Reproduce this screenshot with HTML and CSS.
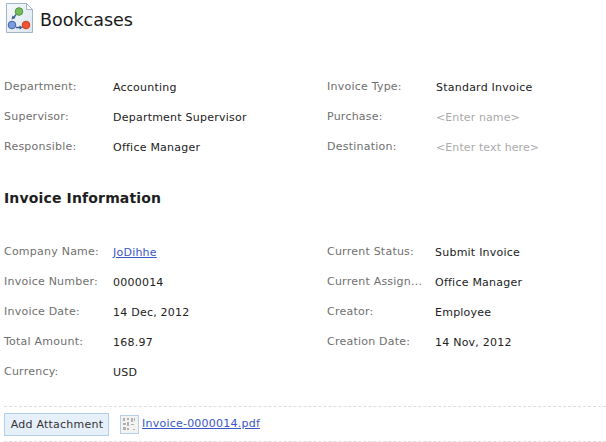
FILE: index.html
```html
<!DOCTYPE html>
<html lang="en">
<head>
<meta charset="utf-8">
<title>Bookcases</title>
<link rel="stylesheet" href="styles.css">
</head>
<body>
<header class="title-bar">
  <svg class="app-icon" width="27" height="30" viewBox="0 0 27 30">
    <defs>
      <linearGradient id="page" x1="0" y1="0" x2="1" y2="1">
        <stop offset="0" stop-color="#f8fafc"/>
        <stop offset="1" stop-color="#dbe5ef"/>
      </linearGradient>
    </defs>
    <path d="M0.500 0.500H20.500L26.500 6.500V29.500H0.500Z" fill="url(#page)" stroke="#a3b5c8"/>
    <path d="M20.500 0.500V6.500H26.500Z" fill="#fff" stroke="#a3b5c8"/>
    <path d="M10 11.500L7.500 15M10 24.500H15" stroke="#3d5f96" stroke-width="1.300" fill="none"/>
    <path d="M5.500 16.500L9.500 15L6.500 12.500ZM17 24.500L13.500 22.500V26.500Z" fill="#3d5f96"/>
    <circle cx="13" cy="8.500" r="3.800" fill="#76bb5c" stroke="#4f9a3f"/>
    <circle cx="6" cy="22" r="3.800" fill="#7a9edd" stroke="#3f62a8"/>
    <circle cx="20" cy="22" r="3.800" fill="#f0552f" stroke="#c5401f"/>
  </svg>
  <h1 class="title">Bookcases</h1>
</header>

<section class="fields top-fields">
  <div class="field"><span class="label">Department:</span><span class="value">Accounting</span></div>
  <div class="field"><span class="label">Invoice Type:</span><span class="value">Standard Invoice</span></div>
  <div class="field"><span class="label">Supervisor:</span><span class="value">Department Supervisor</span></div>
  <div class="field"><span class="label">Purchase:</span><span class="value placeholder">&lt;Enter name&gt;</span></div>
  <div class="field"><span class="label">Responsible:</span><span class="value">Office Manager</span></div>
  <div class="field"><span class="label">Destination:</span><span class="value placeholder">&lt;Enter text here&gt;</span></div>
</section>

<h2 class="section-title">Invoice Information</h2>

<section class="fields info-fields">
  <div class="field"><span class="label">Company Name:</span><span class="value"><a href="#">JoDihhe</a></span></div>
  <div class="field narrow"><span class="label">Current Status:</span><span class="value">Submit Invoice</span></div>
  <div class="field"><span class="label">Invoice Number:</span><span class="value">0000014</span></div>
  <div class="field narrow"><span class="label">Current Assign...</span><span class="value">Office Manager</span></div>
  <div class="field"><span class="label">Invoice Date:</span><span class="value">14 Dec, 2012</span></div>
  <div class="field narrow"><span class="label">Creator:</span><span class="value">Employee</span></div>
  <div class="field"><span class="label">Total Amount:</span><span class="value">168.97</span></div>
  <div class="field narrow"><span class="label">Creation Date:</span><span class="value">14 Nov, 2012</span></div>
  <div class="field"><span class="label">Currency:</span><span class="value">USD</span></div>
</section>

<footer class="attachments">
  <button class="add-btn" type="button">Add Attachment</button>
  <svg class="file-icon" width="19" height="19" viewBox="0 0 19 19">
    <rect x="0.500" y="0.500" width="18" height="18" fill="#f2f2f2" stroke="#b5cfe6"/>
    <path d="M3 3h2v3H3zM7 3h2v2H7zM11 3h2v4h-2zM14 3h1v3h-1zM3 8h3v2H3zM7 7h2v4H7zM11 9h3v1h-3zM3 12h3v3H3zM7 13h2v2H7zM13 14h2v1h-2z" fill="#b0b0b0"/>
  </svg>
  <a class="file-link" href="#">Invoice-0000014.pdf</a>
</footer>
</body>
</html>
```
FILE: styles.css
```css
html, body {
  margin: 0;
  padding: 0;
  background: #fff;
}
body {
  width: 606px;
  height: 442px;
  overflow: hidden;
  font-family: "DejaVu Sans", Verdana, sans-serif;
  font-size: 11px;
  letter-spacing: 0.23px;
  color: #222;
}
.title-bar {
  display: flex;
  align-items: center;
  gap: 7px;
  padding: 4px 0 0 6px;
  height: 32px;
}
.app-icon { flex: none; margin-top: -4px; }
.title {
  margin: 0;
  font-size: 17.500px;
  letter-spacing: 0;
  font-weight: 400;
  color: #1a1a1a;
}
.fields {
  display: grid;
  grid-template-columns: 323px 1fr;
  padding-left: 4px;
}
.top-fields { margin-top: 41px; }
.info-fields { margin-top: 36px; }
.field {
  display: flex;
  height: 30px;
  line-height: 13px;
}
.label {
  flex: none;
  width: 109px;
  padding-top: 3px;
  color: #6f6f6f;
  white-space: nowrap;
}
.value {
  padding-top: 4px;
  color: #222;
  white-space: nowrap;
}
.narrow .label { width: 108px; }
.placeholder { color: #aaa; letter-spacing: 0.1px; }
a { color: #3a56c8; }
.section-title {
  margin: 23px 0 0 4px;
  font-size: 14px;
  letter-spacing: 0.15px;
  line-height: 16px;
  font-weight: 700;
  color: #1e1e1e;
}
.attachments {
  display: flex;
  align-items: center;
  margin: 14px 0 0 4px;
  width: 602px;
  height: 34px;
  border-top: 1px dashed #ddd;
  border-bottom: 1px dashed #ddd;
}
.add-btn {
  height: 23px;
  width: 105px;
  padding: 0 0 0 1px;
  border: 1px solid #b3cfe8;
  background: #e6f0fb;
  color: #333;
  font: inherit;
  letter-spacing: inherit;
}
.file-icon { margin-left: 11px; margin-top: 1px; flex: none; }
.file-link { margin-left: 3px; margin-top: -2px; }
```
